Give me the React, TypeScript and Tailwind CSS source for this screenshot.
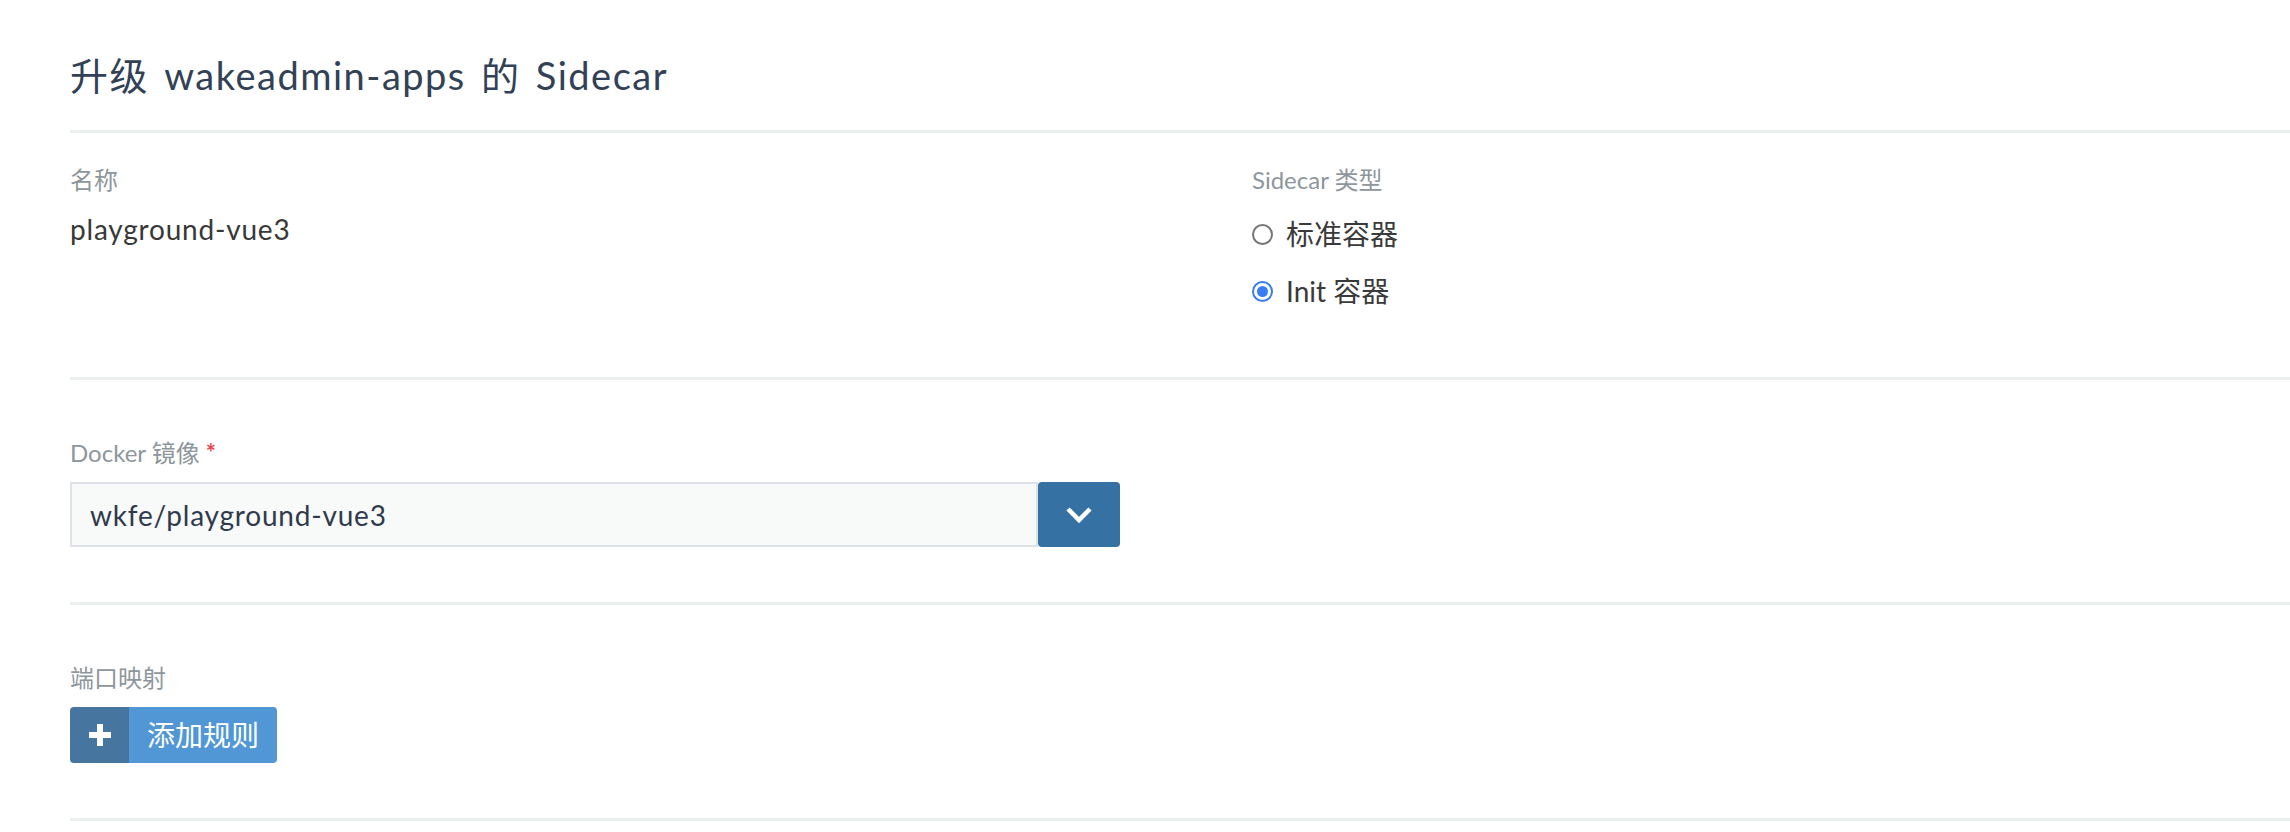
const font = "font-['Lato','Noto_Sans_CJK_SC',sans-serif]";

const Divider = () => <div className="h-[3px] bg-[#eceff0]" />;

const Label = ({ children }: { children: React.ReactNode }) => (
  <div className="text-[24px] leading-[32px] text-[#8e969d]">{children}</div>
);

const Radio = ({ checked, label }: { checked?: boolean; label: string }) => (
  <label className="flex items-center h-[40px] gap-[13px]">
    {checked ? (
      <span className="w-[21px] h-[21px] rounded-full border-[2px] border-[#3a7cf3] bg-white flex items-center justify-center">
        <span className="w-[11px] h-[11px] rounded-full bg-[#3a7cf3]" />
      </span>
    ) : (
      <span className="w-[21px] h-[21px] rounded-full border-[2px] border-[#767676] bg-white" />
    )}
    <span className="text-[28px] text-[#3a3a3a]">{label}</span>
  </label>
);

export default function App() {
  return (
    <div className={`${font} bg-white min-h-[832px] pl-[70px]`}>
      <h1 className="pt-[51px] mb-[31px] text-[38px] leading-[48px] tracking-[1.5px] [word-spacing:4px] text-[#324155]">
        升级 wakeadmin-apps 的 Sidecar
      </h1>
      <Divider />

      <section className="pt-[31px] pb-[66px] grid grid-cols-[1182px_1fr]">
        <div>
          <Label>名称</Label>
          <div className="mt-[13px] text-[28px] leading-[40px] tracking-[0.8px] text-[#383838]">playground-vue3</div>
        </div>
        <div>
          <Label>Sidecar 类型</Label>
          <div className="mt-[18px] flex flex-col gap-[17px]">
            <Radio label="标准容器" />
            <Radio checked label="Init 容器" />
          </div>
        </div>
      </section>
      <Divider />

      <section className="pt-[57px] pb-[55px]">
        <Label>
          Docker 镜像 <span className="text-[#e5484d] font-bold">*</span>
        </Label>
        <div className="mt-[13px] flex h-[65px]">
          <div className="w-[968px] flex items-center bg-[#f8f9f9] border-[2px] border-[#dee2e6] pl-[18px] text-[28px] tracking-[0.8px] text-[#2f3a4c]">
            wkfe/playground-vue3
          </div>
          <button className="w-[82px] bg-[#3572a3] rounded-[4px] flex items-center justify-center">
            <svg width="28" height="18" viewBox="0 0 28 18" fill="none">
              <path d="M3 3l11 11L25 3" stroke="white" strokeWidth="4.5" />
            </svg>
          </button>
        </div>
      </section>
      <Divider />

      <section className="pt-[57px] pb-[55px]">
        <Label>端口映射</Label>
        <button className="mt-[13px] flex h-[56px] rounded-[4px] overflow-hidden text-white">
          <span className="w-[59px] bg-[#46769f] flex items-center justify-center">
            <svg width="22" height="22" viewBox="0 0 22 22">
              <path d="M8 0h6v8h8v6h-8v8H8v-8H0V8h8z" fill="white" />
            </svg>
          </span>
          <span className="bg-[#5297d5] flex items-center pl-[18px] pr-[18px] text-[28px]">添加规则</span>
        </button>
      </section>
      <Divider />
    </div>
  );
}
